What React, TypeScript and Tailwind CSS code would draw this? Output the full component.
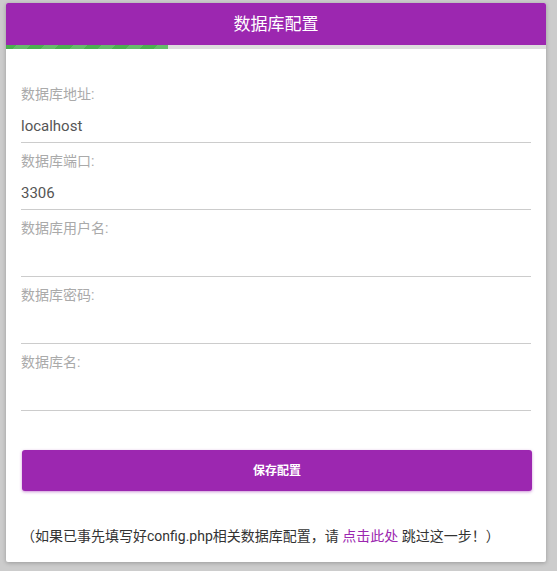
import React, { useState } from "react";

const fields = [
  { label: "数据库地址:", value: "localhost" },
  { label: "数据库端口:", value: "3306" },
  { label: "数据库用户名:", value: "" },
  { label: "数据库密码:", value: "", type: "password" },
  { label: "数据库名:", value: "" },
];

function App() {
  const [values, setValues] = useState(fields.map((f) => f.value));

  return (
    <div className="min-h-[571px] w-full bg-[#cccccc] px-[6px] pt-[3px] pb-[9px] font-['Roboto','Noto_Sans_CJK_SC',sans-serif]">
      <div className="w-[540px] overflow-hidden rounded-[2px] bg-white shadow-[0_1px_4px_rgba(0,0,0,0.25)]">
        <div className="flex h-[42px] items-center justify-center pt-[1px] bg-[#9c27b0] text-[17px] text-white">
          数据库配置
        </div>
        <div className="h-[4px] bg-[#dddddd]">
          <div className="h-full w-[162px] bg-[repeating-linear-gradient(-45deg,#66bb6a_0,#66bb6a_10px,#4caf50_10px,#4caf50_20px)]" />
        </div>

        <div className="px-[15px] pt-[35px]">
          {fields.map((field, i) => (
            <div key={i} className="mb-[8px]">
              <label className="block h-[20px] text-[14px] leading-[20px] text-[#aaaaaa]">
                {field.label}
              </label>
              <input
                type={field.type || "text"}
                value={values[i]}
                onChange={(e) => {
                  const next = [...values];
                  next[i] = e.target.value;
                  setValues(next);
                }}
                className="block h-[39px] w-full border-b border-[#cccccc] bg-transparent pt-[5px] text-[15px] text-[#555555] outline-none"
              />
            </div>
          ))}

          <button className="ml-[1px] mt-[31px] h-[41px] w-[510px] rounded-[3px] bg-[#9c27b0] text-[12px] font-bold text-white shadow-[0_1px_3px_rgba(156,39,176,0.5)]">
            保存配置
          </button>

          <p className="mt-[35px] pb-[16px] text-[14px] leading-[20px] text-[#333333]">
            （如果已事先填写好config.php相关数据库配置，请{" "}
            <a href="#" className="text-[#9c27b0]">
              点击此处
            </a>{" "}
            跳过这一步！）
          </p>
        </div>
      </div>
    </div>
  );
}

export default App;
